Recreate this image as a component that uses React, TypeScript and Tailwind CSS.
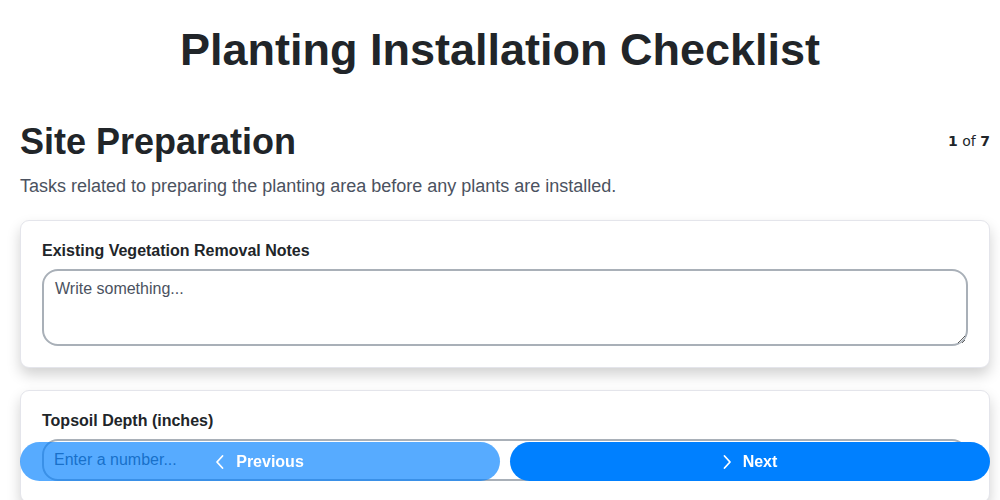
import * as React from "react"

const sans = { fontFamily: '"Liberation Sans", Arial, sans-serif' }

function ChevronLeft() {
  return (
    <svg width="16" height="18" viewBox="0 0 16 18" fill="none" stroke="currentColor" strokeWidth="1.8" strokeLinecap="round" strokeLinejoin="round">
      <path d="M10.5 3 5 9l5.5 6" />
    </svg>
  )
}

function ChevronRight() {
  return (
    <svg width="16" height="18" viewBox="0 0 16 18" fill="none" stroke="currentColor" strokeWidth="1.8" strokeLinecap="round" strokeLinejoin="round">
      <path d="m5.5 3 5.5 6-5.5 6" />
    </svg>
  )
}

export default function App() {
  return (
    <div className="min-h-screen bg-white pb-24 font-['Liberation_Sans',Arial,sans-serif] text-[#212529]">
      {/* Title */}
      <h1 className="pt-[22px] text-center text-[45px] font-bold leading-[56px]">
        Planting Installation Checklist
      </h1>

      <div className="pl-5 pr-[10px]">
        {/* Section header */}
        <div className="mt-[42px] flex items-start justify-between">
          <h2 className="text-[36px] font-bold leading-[44px]">Site Preparation</h2>
          <div className="mt-[11px] font-['DejaVu_Sans',sans-serif] text-[14px]">
            <span className="font-bold">1</span> of <span className="font-bold">7</span>
          </div>
        </div>
        <p className="mt-[9px] text-[18px] leading-[27px] text-[#4b5260]">
          Tasks related to preparing the planting area before any plants are installed.
        </p>

        {/* Cards */}
        <div className="mt-[20px] flex flex-col gap-[22px]">
          <div className="rounded-[9px] border border-[#e4e5eb] bg-white px-[21px] pb-[21px] pt-[20px] shadow-[0_7px_14px_rgba(0,0,0,0.18)]">
            <label className="block text-[16px] font-bold leading-[19px]">Existing Vegetation Removal Notes</label>
            <textarea
              placeholder="Write something..."
              className="mt-[9px] block h-[77px] w-full resize-y rounded-[16px] border-2 border-[#a9b0b8] px-[11px] py-[6px] text-[16px] text-[#212529] placeholder:text-[#4b5260] outline-none"
              style={sans}
            />
          </div>

          <div className="rounded-[9px] border border-[#e4e5eb] bg-white px-[21px] pb-[21px] pt-[20px] shadow-[0_7px_14px_rgba(0,0,0,0.18)]">
            <label className="block text-[16px] font-bold leading-[19px]">Topsoil Depth (inches)</label>
            <input
              type="number"
              placeholder="Enter a number..."
              className="mt-[9px] block h-[42px] w-full rounded-[16px] border-2 border-[#a9b0b8] px-[10px] text-[16px] placeholder:text-[#4b5260] outline-none"
              style={sans}
            />
          </div>
        </div>
      </div>

      {/* Bottom navigation */}
      <div className="fixed bottom-[19px] left-5 right-[10px] flex gap-[10px]">
        <button className="flex h-[39px] flex-1 items-center justify-center gap-[8px] rounded-full bg-[#0080ff]/[0.66] pr-[4px] text-[16px] font-bold text-white">
          <ChevronLeft />
          Previous
        </button>
        <button className="flex h-[39px] flex-1 items-center justify-center gap-[8px] rounded-full bg-[#0080ff] pr-[4px] text-[16px] font-bold text-white">
          <ChevronRight />
          Next
        </button>
      </div>
    </div>
  )
}
